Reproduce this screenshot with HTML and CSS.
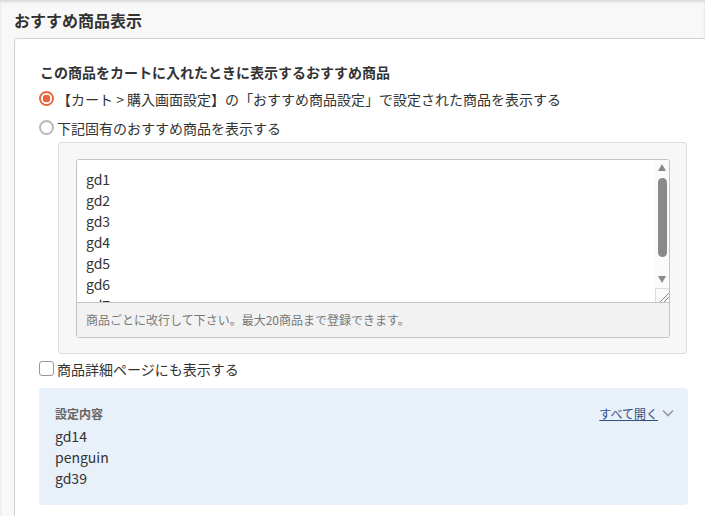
FILE: index.html
```html
<!DOCTYPE html>
<html>
    <head>
        <meta http-equiv="Content-Type" content="text/html; charset=UTF-8" />
        <title>おすすめ商品表示</title>
        <link rel="stylesheet" href="styles.css">
    </head>
    <body>
        <h1 class="pageTitle">おすすめ商品表示</h1>
        <div class="card">
            <h2 class="sectionTitle">この商品をカートに入れたときに表示するおすすめ商品</h2>
            <label class="choice">
                <input type="radio" name="recommend" class="radio" checked="" />
                <span>【カート &gt; 購入画面設定】の「おすすめ商品設定」で設定された商品を表示する</span>
            </label>
            <label class="choice">
                <input type="radio" name="recommend" class="radio" />
                <span>下記固有のおすすめ商品を表示する</span>
            </label>
            <div class="subBox">
                <div class="editor">
                    <div class="editorBody">
                        <textarea id="txtItems" class="items" spellcheck="false">gd1
gd2
gd3
gd4
gd5
gd6
gd7
gd8
gd9
gd10
gd11
gd12
gd13
gd14
gd15</textarea>
                        <div class="scrollbar">
                            <div class="arrowUp"></div>
                            <div class="track"><div class="thumb"></div></div>
                            <div class="arrowDown"></div>
                            <div class="grip"></div>
                        </div>
                    </div>
                    <div class="editorFoot">商品ごとに改行して下さい。最大20商品まで登録できます。</div>
                </div>
            </div>
            <label class="choice check">
                <input type="checkbox" class="checkbox" />
                <span>商品詳細ページにも表示する</span>
            </label>
            <div class="summary">
                <div class="summaryHead">
                    <span class="summaryLabel">設定内容</span>
                    <a href="#" class="openAll">すべて開く</a>
                    <svg class="chevron" width="12" height="8" viewBox="0 0 12 8">
                        <path d="M1 1.5 L6 6.5 L11 1.5" fill="none" stroke="#999" stroke-width="1.6"/>
                    </svg>
                </div>
                <div class="summaryLine">gd14</div>
                <div class="summaryLine">penguin</div>
                <div class="summaryLine">gd39</div>
            </div>
        </div>
    </body>
</html>
```

FILE: styles.css
```css
html, body {
    height: 100%;
}
body {
    margin: 0;
    overflow: hidden;
    font-family: "Noto Sans CJK JP", "Noto Sans", sans-serif;
    font-size: 14px;
    color: #333;
    background: #f8f8f8;
    box-shadow: inset 0 2px 3px rgba(0,0,0,0.12);
    padding: 8px 0 0 14px;
    box-sizing: border-box;
}
.pageTitle {
    margin: 0;
    font-size: 16px;
    line-height: 24px;
    font-weight: bold;
    color: #333;
}
.card {
    margin-top: 6px;
    width: 740px;
    height: 600px;
    background: white;
    border: 1px solid #d2d2d2;
    border-radius: 4px 0 0 0;
    padding: 23px 0 0 25px;
    box-sizing: border-box;
}
.sectionTitle {
    margin: 0 0 2px 0;
    font-size: 14px;
    line-height: 20px;
    font-weight: bold;
}
.choice {
    display: flex;
    align-items: center;
    gap: 3px;
    height: 29px;
    line-height: 20px;
}
.radio, .checkbox {
    -webkit-appearance: none;
    appearance: none;
    margin: 0 0 0 -1px;
    flex: none;
    box-sizing: border-box;
}
.radio {
    width: 15px;
    height: 15px;
    border: 2px solid #b8b8b8;
    border-radius: 50%;
    background: white;
}
.radio:checked {
    border-color: #e9673f;
    background: radial-gradient(circle, #e9673f 0 3.6px, white 4.1px);
}
.checkbox {
    width: 15px;
    height: 15px;
    border: 1.5px solid #999;
    border-radius: 3px;
    background: white;
}
.subBox {
    margin: 0 0 0 18px;
    width: 629px;
    background: #f7f7f7;
    border: 1px solid #dcdcdc;
    border-radius: 3px;
    padding: 16px 16px 15px 17px;
    box-sizing: border-box;
}
.editor {
    border: 1px solid #c4c4c4;
    border-radius: 3px;
    background: white;
    overflow: hidden;
}
.editorBody {
    display: flex;
    height: 142px;
    border-bottom: 1px solid #c4c4c4;
}
.items {
    flex: 1;
    border: none;
    outline: none;
    resize: none;
    overflow: hidden;
    margin: 0;
    padding: 9px 9px 0 9px;
    font-family: "Noto Sans CJK JP", "Noto Sans", sans-serif;
    font-size: 14px;
    line-height: 21px;
    color: #333;
}
.scrollbar {
    width: 14px;
    display: flex;
    flex-direction: column;
    align-items: center;
    background: #fafafa;
}
.arrowUp, .arrowDown {
    width: 0;
    height: 0;
    border-left: 4.5px solid transparent;
    border-right: 4.5px solid transparent;
}
.arrowUp {
    margin-top: 4px;
    border-bottom: 7px solid #8a8a8a;
}
.arrowDown {
    margin-bottom: 5px;
    border-top: 7px solid #8a8a8a;
}
.track {
    flex: 1;
    padding-top: 7px;
}
.thumb {
    width: 9px;
    height: 79px;
    border-radius: 5px;
    background: #8a8a8a;
}
.grip {
    width: 14px;
    height: 14px;
    box-sizing: border-box;
    border-left: 1px solid #ddd;
    border-top: 1px solid #ddd;
    background:
        linear-gradient(135deg, transparent 0 62%, #888 62% 68%, transparent 68% 78%, #888 78% 84%, transparent 84%);
}
.editorFoot {
    height: 34px;
    line-height: 34px;
    padding: 0 9px;
    font-size: 12px;
    color: #777;
    background: #f2f2f2;
}
.check {
    height: 29px;
}
.summary {
    margin: 5px 0 0 -1px;
    width: 649px;
    background: #e8f0f9;
    border-radius: 4px;
    padding: 16px 14px 16px 16px;
    box-sizing: border-box;
}
.summaryHead {
    display: flex;
    align-items: center;
    height: 18px;
    margin-bottom: 4px;
}
.summaryLabel {
    flex: 1;
    font-size: 12px;
    font-weight: bold;
    color: #666;
}
.openAll {
    font-size: 12px;
    color: #2f4f86;
    text-decoration: underline;
}
.chevron {
    margin-left: 4px;
}
.summaryLine {
    line-height: 21px;
}
```
